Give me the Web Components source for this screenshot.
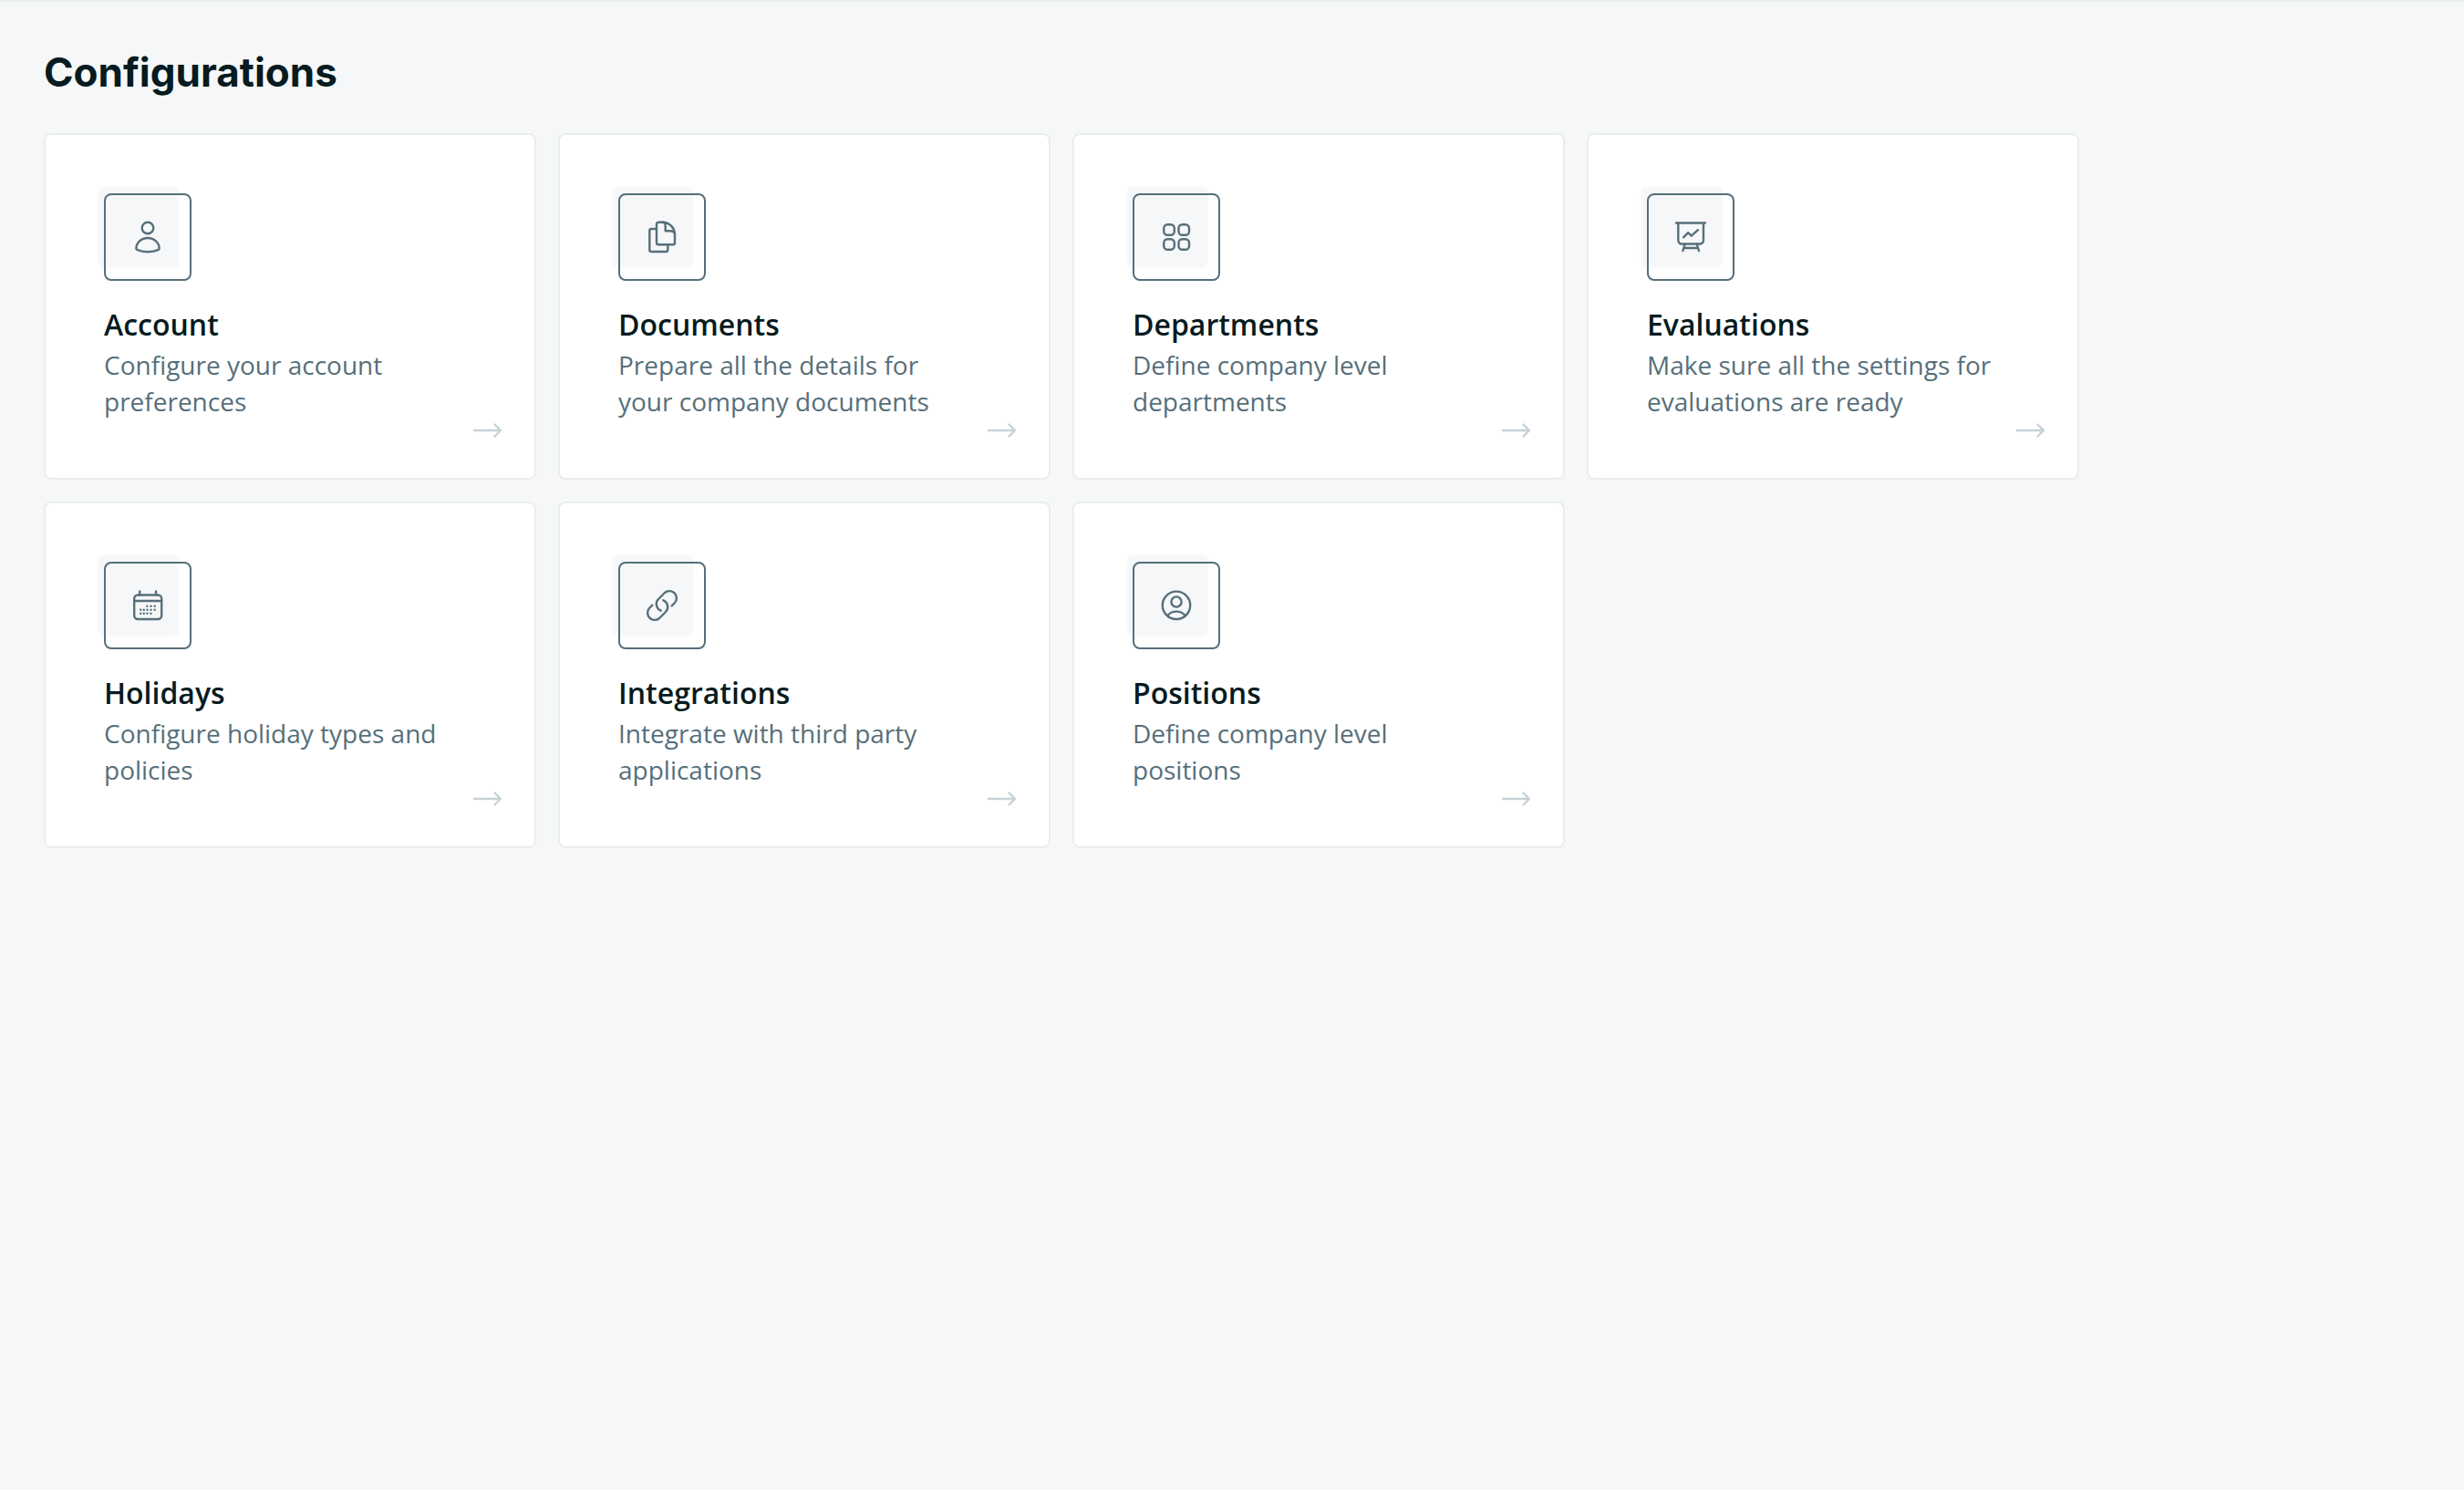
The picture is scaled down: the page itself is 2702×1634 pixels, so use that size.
<!DOCTYPE html>
<html lang="en">
<head>
<meta charset="utf-8">
<meta name="viewport" content="width=device-width, initial-scale=1">
<title>Configurations</title>
<style>
  :root {
    --page: #f5f7f9;
    --line: #eaedee;
    --ink: #071b20;
    --muted: #576f7a;
    --arrow: #c5d2d6;
  }
  body {
    margin: 0;
    background: var(--page);
    font-family: "Open Sans", sans-serif;
    color: var(--ink);
  }
</style>
</head>
<body>
<config-page heading="Configurations">
  <config-card icon="account" href="#account">
    <span slot="title">Account</span>
    Configure your account preferences
  </config-card>
  <config-card icon="documents" href="#documents">
    <span slot="title">Documents</span>
    Prepare all the details for your company documents
  </config-card>
  <config-card icon="departments" href="#departments">
    <span slot="title">Departments</span>
    Define company level departments
  </config-card>
  <config-card icon="evaluations" href="#evaluations">
    <span slot="title">Evaluations</span>
    Make sure all the settings for evaluations are ready
  </config-card>
  <config-card icon="holidays" href="#holidays">
    <span slot="title">Holidays</span>
    Configure holiday types and policies
  </config-card>
  <config-card icon="integrations" href="#integrations">
    <span slot="title">Integrations</span>
    Integrate with third party applications
  </config-card>
  <config-card icon="positions" href="#positions">
    <span slot="title">Positions</span>
    Define company level positions
  </config-card>
</config-page>

<script>
const ICONS = {
  account: `
    <circle cx="20" cy="10" r="6.3"/>
    <path d="M7.4 32.6C7.4 26 13 21 20 21s12.600 5 12.600 11.600c0 .6-.3 1-.9 1.300C28.400 35.500 24.300 36.200 20 36.200s-8.400-.7-11.700-2.300c-.6-.3-.9-.7-.9-1.300z"/>`,
  documents: `
    <path d="M13.500 11H8.300a2 2 0 0 0-2 2v21a2 2 0 0 0 2 2h16a2 2 0 0 0 2-2v-4.700"/>
    <path d="M16 3.700h4.500c7.500 0 13.500 6 13.500 13.500V26.300a2 2 0 0 1-2 2H16a2 2 0 0 1-2-2V5.700a2 2 0 0 1 2-2z"/>
    <path d="M20.500 3.700c2.300 0 3.200 1.800 3.200 4V13.300h5.300c3 0 5 1.200 5 4"/>`,
  departments: `
    <rect x="6.300" y="6.300" width="11.500" height="11.500" rx="4"/>
    <rect x="22.500" y="6.300" width="11.500" height="11.500" rx="4"/>
    <rect x="6.300" y="22.300" width="11.500" height="11.500" rx="4"/>
    <rect x="22.500" y="22.300" width="11.500" height="11.500" rx="4"/>`,
  evaluations: `
    <path d="M4 4.500h32M6.300 4.500v19a4 4 0 0 0 4 4h19.700a4 4 0 0 0 4-4v-19"/>
    <path d="M12.200 20.200l5-5 3.500 3.500 7.300-6.500"/>
    <path d="M13.700 27.700l-2.300 7.300M26.700 27.700l2.300 7.300M12.500 32h15.400"/>`,
  holidays: `
    <rect x="5.200" y="8.500" width="30" height="26.500" rx="4"/>
    <path d="M5.200 15h30M11.200 4.500v4M29 4.500v4"/>
    <path d="M19.300 20.800h0M23.500 20.800h0M27.700 20.800h0M12.300 24.800h0M15.800 24.800h0M19.500 24.800h0M23.500 24.800h0M27.700 24.800h0M12.300 28.800h0M15.800 28.800h0M19.500 28.800h0M23.500 28.800h0"/>`,
  integrations: `
    <path d="M30.700 20.300L34 17A7.800 7.800 0 0 0 23 6L16 13a7.800 7.800 0 0 0 2.700 12.700"/>
    <path d="M9.300 19.700L6 23A7.800 7.800 0 0 0 17 34L24 27a7.800 7.800 0 0 0-2.700-12.700"/>`,
  positions: `
    <circle cx="20" cy="19.800" r="15.200"/>
    <circle cx="20" cy="16" r="5.600"/>
    <path d="M10.300 31.300C12.500 28.200 16 26.600 20 26.600s7.500 1.600 9.700 4.700"/>`
};

class ConfigIcon extends HTMLElement {
  constructor() {
    super();
    const root = this.attachShadow({ mode: "open" });
    root.innerHTML = `
    <style>
      :host {
        display: flex;
        align-items: center;
        justify-content: center;
        box-sizing: border-box;
        width: 96px;
        height: 96px;
        border: 2px solid var(--muted);
        border-radius: 8px;
        position: relative;
        color: var(--muted);
      }
      /* soft tile peeking out behind the outlined one */
      :host::before {
        content: "";
        position: absolute;
        z-index: -1;
        top: -9px;
        left: -8px;
        width: 88px;
        height: 88px;
        border-radius: 6px;
        background: var(--page);
        box-shadow: 0 0 4px var(--page);
      }
      svg {
        width: 40px;
        height: 40px;
        fill: none;
        stroke: currentColor;
        stroke-width: 2.4;
        stroke-linecap: round;
        stroke-linejoin: round;
      }
    </style>
    <svg viewBox="0 0 40 40" aria-hidden="true">${ICONS[this.getAttribute("name")] || ""}</svg>`;
  }
}

class ConfigCard extends HTMLElement {
  constructor() {
    super();
    const root = this.attachShadow({ mode: "open" });
    root.innerHTML = `
    <style>
      :host {
        display: block;
      }
      /* isolated so the tile behind the icon stays above the card background */
      a {
        display: grid;
        grid-template-columns: 1fr 32px;
        column-gap: 16px;
        align-items: end;
        isolation: isolate;
        box-sizing: border-box;
        height: 100%;
        padding: 64px 36px 44px 64px;
        border: 2px solid var(--line);
        border-radius: 8px;
        background: #fff;
        color: inherit;
        text-decoration: none;
      }
      .body {
        align-self: start;
        padding-bottom: 20px;
      }
      h2 {
        margin: 24px 0 0;
        font-size: 32px;
        line-height: 48px;
        font-weight: 600;
      }
      p {
        margin: 0;
        font-size: 28px;
        line-height: 40px;
        color: var(--muted);
      }
      .arrow {
        width: 32px;
        height: 16px;
        fill: none;
        stroke: var(--arrow);
        stroke-width: 2.4;
        stroke-linecap: round;
        stroke-linejoin: round;
      }
    </style>
    <a href="${this.getAttribute("href") || "#"}">
      <div class="body">
        <config-icon name="${this.getAttribute("icon")}"></config-icon>
        <h2><slot name="title"></slot></h2>
        <p><slot></slot></p>
      </div>
      <svg class="arrow" viewBox="0 0 32 16" aria-hidden="true"><path d="M2 8h29M24.500 1.500L31 8l-6.500 6.500"/></svg>
    </a>`;
  }
}

class ConfigPage extends HTMLElement {
  constructor() {
    super();
    const root = this.attachShadow({ mode: "open" });
    root.innerHTML = `
    <style>
      :host {
        display: block;
        padding: 46px 48px;
        border-top: 2px solid var(--line);
      }
      h1 {
        margin: 0 0 36px;
        font-family: Inter, "Open Sans", sans-serif;
        font-size: 44px;
        line-height: 62px;
        font-weight: 700;
      }
      .grid {
        display: grid;
        grid-template-columns: repeat(auto-fill, 540px);
        gap: 24px;
      }
    </style>
    <h1>${this.getAttribute("heading")}</h1>
    <main class="grid"><slot></slot></main>`;
  }
}

customElements.define("config-icon", ConfigIcon);
customElements.define("config-card", ConfigCard);
customElements.define("config-page", ConfigPage);
</script>
</body>
</html>
